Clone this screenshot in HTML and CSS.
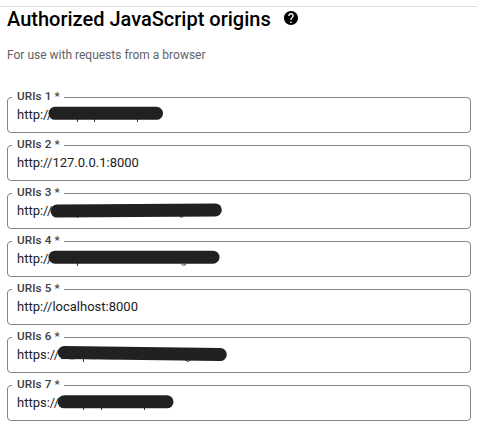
FILE: index.html
```html
<!DOCTYPE html>
<html lang="en">
<head>
<meta charset="utf-8">
<title>Authorized JavaScript origins</title>
<link rel="stylesheet" href="styles.css">
</head>
<body>
<section class="origins">
  <header class="heading">
    <h2 class="title">Authorized JavaScript origins</h2>
    <svg class="help" viewBox="2 2 20 20" aria-label="Help"><path d="M12 2C6.48 2 2 6.48 2 12s4.48 10 10 10 10-4.48 10-10S17.52 2 12 2zm1 17h-2v-2h2v2zm2.07-7.75l-.9.92C13.45 12.9 13 13.5 13 15h-2v-.5c0-1.1.45-2.1 1.17-2.83l1.24-1.26c.37-.36.59-.86.59-1.41 0-1.1-.9-2-2-2s-2 .9-2 2H8c0-2.21 1.79-4 4-4s4 1.79 4 4c0 .88-.36 1.68-.93 2.25z"/></svg>
  </header>
  <p class="hint">For use with requests from a browser</p>
  <div class="fields">
    <div class="field"><span class="label">URIs 1 *</span><span class="value">http://</span>
      <svg class="redaction" viewBox="0 0 464 36"><path class="tail" d="M70.5 20v5M87.5 20v5M130.5 20v5"/><path class="stroke" d="M48 16.3H149.5"/></svg></div>
    <div class="field"><span class="label">URIs 2 *</span><span class="value">http://127.0.0.1:8000</span></div>
    <div class="field"><span class="label">URIs 3 *</span><span class="value">http://</span>
      <svg class="redaction" viewBox="0 0 464 36"><path class="tail" d="M70.5 20v5M172 22.5q2.5 3.5 5 0"/><path class="stroke" d="M50 18L208.3 17"/></svg></div>
    <div class="field"><span class="label">URIs 4 *</span><span class="value">http://</span>
      <svg class="redaction" viewBox="0 0 464 36"><path class="tail" d="M70.5 20v5M174 22.5q3 3.5 5.5 0"/><path class="stroke" d="M48 16.2H206"/></svg></div>
    <div class="field"><span class="label">URIs 5 *</span><span class="value">http://localhost:8000</span></div>
    <div class="field"><span class="label">URIs 6 *</span><span class="value">https://</span>
      <svg class="redaction" viewBox="0 0 464 36"><path class="tail" d="M54 21.6h5M62 21.8h6M76.5 20v5M82 21.6h7M96 21.6h15M178 23q3 3 5.5 0"/><path class="stroke" d="M57.3 15.4L213.3 17.6"/></svg></div>
    <div class="field"><span class="label">URIs 7 *</span><span class="value">https://</span>
      <svg class="redaction" viewBox="0 0 464 36"><path class="tail" d="M76.5 20v5M94.5 20v5M137.5 20v5"/><path class="stroke" d="M57.1 16.8H160"/></svg></div>
  </div>
</section>
</body>
</html>
```
FILE: styles.css
```css
* { box-sizing: border-box; }
body {
  margin: 0;
  padding-top: 6px;
  background: #fff;
  font-family: Roboto, "Liberation Sans", sans-serif;
}
.origins {
  border-top: 1px solid #e0e0e0;
  padding: 0 6px 0 7px;
}
.heading {
  display: flex;
  align-items: center;
  height: 24px;
  gap: 13px;
}
.title {
  margin: 0;
  font-size: 20px;
  font-weight: 500;
  line-height: 24px;
  color: #000;
}
.help { width: 14px; height: 14px; margin-bottom: 2px; fill: #000; }
.hint {
  margin: 16px 0 0;
  font-size: 12px;
  line-height: 16px;
  color: #5f6368;
}
.fields {
  display: grid;
  gap: 12px;
  margin-top: 34px;
}
.field {
  position: relative;
  height: 36px;
  padding: 9px 9px 0;
  border: 1px solid #80868b;
  border-radius: 4px;
}
.label {
  position: absolute;
  top: -10px;
  left: 4px;
  width: 52px;
  padding-left: 5px;
  background: #fff;
  font-size: 11.7px;
  font-weight: 500;
  line-height: 16px;
  letter-spacing: 0.1px;
  white-space: nowrap;
  color: #3c4043;
}
.value {
  display: block;
  font-size: 13px;
  line-height: 16px;
  color: #202124;
}
.redaction {
  position: absolute;
  top: -1px;
  left: -1px;
  width: 464px;
  height: 36px;
}
.stroke { fill: none; stroke: #212121; stroke-width: 13; stroke-linecap: round; }
.tail { fill: none; stroke: #333; stroke-width: 1; }
```
